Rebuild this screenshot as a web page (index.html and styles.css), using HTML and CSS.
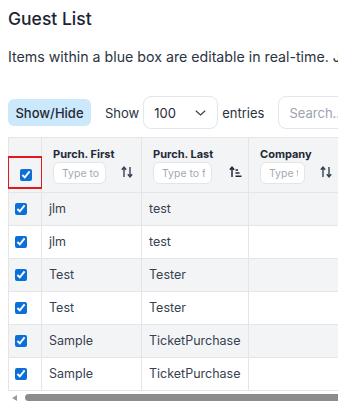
FILE: index.html
```html
<!DOCTYPE html>
<html lang="en">
<head>
  <meta charset="UTF-8">
  <title>Guest List</title>
  <link rel="stylesheet" href="styles.css">
</head>
<body>

  <!-- === Page heading === -->
  <div class="page">
    <h1 class="title">Guest List</h1>
    <p class="note">Items within a blue box are editable in real-time. Just click on a field and start typing to change it.</p>

    <!-- Table controls -->
    <div class="controls">
      <button class="toggle-btn">Show/Hide</button>
      <span class="ctl-text">Show</span>
      <div class="length-select">
        <span>100</span>
        <svg class="chevron" width="11" height="6" viewBox="0 0 11 6"><path d="M0.8 0.8 L5.5 5 L10.2 0.8" fill="none" stroke="#374151" stroke-width="1.2"/></svg>
      </div>
      <span class="ctl-text">entries</span>
      <input class="search" type="text" placeholder="Search...">
    </div>

    <!-- Guest table -->
    <div class="table-wrap">
      <table class="guest-table">
        <colgroup>
          <col style="width:33px">
          <col style="width:100px">
          <col style="width:107px">
          <col style="width:92px">
          <col style="width:100px">
        </colgroup>
        <thead>
          <tr>
            <th class="check-col">
              <div class="highlight"></div>
              <input type="checkbox" class="cb head-cb" checked>
            </th>
            <th>
              <div class="th-inner">
                <div class="th-field">
                  <span class="th-label">Purch. First</span>
                  <input class="filter f-first" type="text" placeholder="Type to filter">
                </div>
                <svg class="sort" width="12" height="12" viewBox="0 0 12 12"><path d="M3 11 V1.5 M0.8 3.8 L3 1.2 L5.2 3.8 M9 1 V10.5 M6.8 8.2 L9 10.8 L11.2 8.2" fill="none" stroke="#374151" stroke-width="1.4"/></svg>
              </div>
            </th>
            <th>
              <div class="th-inner">
                <div class="th-field">
                  <span class="th-label">Purch. Last</span>
                  <input class="filter f-last" type="text" placeholder="Type to filter">
                </div>
                <svg class="sort sort-asc" width="13" height="12" viewBox="0 0 13 12"><path d="M3 11 V1.5 M0.8 3.8 L3 1.2 L5.2 3.8 M6.5 4 H9 M6.5 7 H10.5 M6.5 10.2 H12.5" fill="none" stroke="#1f2937" stroke-width="1.5"/></svg>
              </div>
            </th>
            <th>
              <div class="th-inner">
                <div class="th-field">
                  <span class="th-label">Company</span>
                  <input class="filter f-company" type="text" placeholder="Type to filter">
                </div>
                <svg class="sort" width="12" height="12" viewBox="0 0 12 12"><path d="M3 11 V1.5 M0.8 3.8 L3 1.2 L5.2 3.8 M9 1 V10.5 M6.8 8.2 L9 10.8 L11.2 8.2" fill="none" stroke="#374151" stroke-width="1.4"/></svg>
              </div>
            </th>
            <th>
              <div class="th-inner">
                <div class="th-field">
                  <span class="th-label">Email</span>
                  <input class="filter" type="text" placeholder="Type to filter">
                </div>
              </div>
            </th>
          </tr>
        </thead>
        <tbody id="guest-body">
          <tr><td class="check-col"><input type="checkbox" class="cb" checked></td><td>jlm</td><td>test</td><td></td><td></td></tr>
          <tr><td class="check-col"><input type="checkbox" class="cb" checked></td><td>jlm</td><td>test</td><td></td><td></td></tr>
          <tr><td class="check-col"><input type="checkbox" class="cb" checked></td><td>Test</td><td>Tester</td><td></td><td></td></tr>
          <tr><td class="check-col"><input type="checkbox" class="cb" checked></td><td>Test</td><td>Tester</td><td></td><td></td></tr>
          <tr><td class="check-col"><input type="checkbox" class="cb" checked></td><td>Sample</td><td>TicketPurchase</td><td></td><td></td></tr>
          <tr><td class="check-col"><input type="checkbox" class="cb" checked></td><td>Sample</td><td>TicketPurchase</td><td></td><td></td></tr>
        </tbody>
      </table>
    </div>

    <!-- Horizontal scroll bar -->
    <div class="hscroll">
      <span class="hs-arrow"></span>
      <span class="hs-thumb"></span>
    </div>
  </div>

</body>
</html>
```

FILE: styles.css
```css
/* Base styling */
body {
  margin: 0;
  font-family: Inter, "Noto Sans", sans-serif;
  color: #1f2937;
  background-color: white;
  overflow: hidden;
}

.page {
  padding: 8px 0 0 8px;
}

/* Heading and note */
.title {
  margin: 0;
  font-size: 17.5px;
  line-height: 22px;
  font-weight: 500;
  color: #1c2434;
}

.note {
  margin: 17px 0 0;
  font-size: 14.2px;
  line-height: 20px;
  color: #2b3341;
  white-space: nowrap;
}

/* Controls row */
.controls {
  margin-top: 29px;
  display: flex;
  align-items: center;
  height: 33px;
  white-space: nowrap;
}

.controls > * {
  flex: none;
}

.toggle-btn {
  font-family: inherit;
  font-size: 13px;
  font-weight: 500;
  color: #1f2937;
  background-color: #cce8fb;
  border: none;
  border-radius: 6px;
  height: 27px;
  width: 83px;
  padding: 0;
  margin-right: 14px;
}

.ctl-text {
  font-size: 13px;
  color: #2b3341;
}

.length-select {
  box-sizing: border-box;
  width: 75px;
  height: 33px;
  margin: 0 4px 0 4px;
  padding: 0 11px 0 10px;
  border: 1px solid #e3e5e9;
  border-radius: 8px;
  display: flex;
  align-items: center;
  justify-content: space-between;
  font-size: 13px;
  color: #1f2937;
}

.search {
  box-sizing: border-box;
  width: 120px;
  height: 33px;
  margin-left: 14px;
  padding: 0 10px;
  border: 1px solid #e3e5e9;
  border-radius: 8px;
  font-family: inherit;
  font-size: 13px;
}

.search::placeholder {
  color: #9ca3af;
}

/* Table */
.table-wrap {
  margin-top: 8px;
  overflow: hidden;
}

.guest-table {
  table-layout: fixed;
  width: 432px;
  border-collapse: collapse;
  font-size: 12.5px;
}

.guest-table th,
.guest-table td {
  border: 1px solid #e3e5e9;
  text-align: left;
}

.guest-table thead th {
  background-color: #f3f4f6;
  padding: 10px 8px 8px 11px;
  vertical-align: bottom;
  position: relative;
}

.guest-table thead th:nth-child(3) {
  padding-right: 6px;
}

.guest-table td {
  padding: 6px 6px 6px 7px;
  line-height: 20px;
  color: #374151;
}

.guest-table tbody tr:nth-child(odd) td {
  background-color: #f3f4f6;
}

.th-inner {
  display: flex;
  align-items: center;
  justify-content: space-between;
}

.th-field {
  display: flex;
  flex-direction: column;
}

.th-label {
  font-size: 11px;
  line-height: 13px;
  font-weight: 700;
  color: #1f2937;
  white-space: nowrap;
}

.filter {
  box-sizing: border-box;
  margin-top: 1px;
  height: 22px;
  padding: 0 6px 0 8px;
  border: 1px solid #e3e5e9;
  border-radius: 6px;
  font-family: inherit;
  font-size: 10.5px;
  background: white;
}

.filter::placeholder {
  color: #a3a9b3;
}

.f-first { width: 53px; }
.f-last { width: 59px; }
.f-company { width: 45px; }

.sort {
  flex: none;
  margin-top: 12px;
}

/* Checkbox column */
.guest-table .check-col {
  padding: 6px 0 6px 6px;
}

.guest-table thead .check-col {
  padding: 0 0 11px 11px;
}

.cb {
  display: block;
  width: 12px;
  height: 12px;
  margin: 4px 0;
  accent-color: #0b6fd8;
}

.head-cb {
  margin: 0;
}

/* Red highlight box over header checkbox */
.highlight {
  position: absolute;
  left: -2px;
  top: 18px;
  width: 32px;
  height: 29px;
  border: 2px solid #e0191f;
}

/* Horizontal scroll bar */
.hscroll {
  height: 13px;
  display: flex;
  align-items: center;
}

.hs-arrow {
  width: 0;
  height: 0;
  margin-left: 4px;
  border-top: 3px solid transparent;
  border-bottom: 3px solid transparent;
  border-right: 5px solid #9a9a9a;
}

.hs-thumb {
  flex: 1;
  height: 7px;
  margin-left: 8px;
  background-color: #8c8c8c;
  border-radius: 4px 0 0 4px;
}
```
